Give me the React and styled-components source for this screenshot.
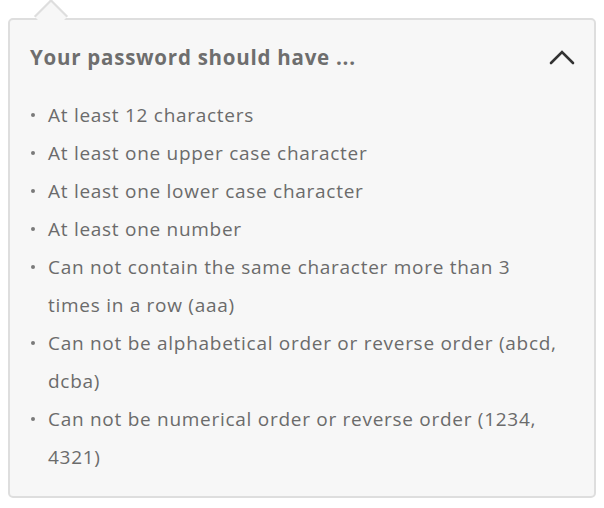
import React from "react";
import styled, { createGlobalStyle } from "styled-components";

const Global = createGlobalStyle`
  html, body { margin: 0; padding: 0; background: #ffffff; }
  body { font-family: "Open Sans", "Noto Sans", sans-serif; }
`;

const Page = styled.div`
  padding: 18px 8px 0 8px;
  width: 604px;
  box-sizing: border-box;
`;

const Popover = styled.section`
  position: relative;
  width: 588px;
  height: 480px;
  box-sizing: border-box;
  background: #f7f7f7;
  border: 2px solid #dedede;
  border-radius: 5px;
  padding: 23px 18px 0 20px;
`;

const Arrow = styled.span`
  position: absolute;
  top: -16px;
  left: 29px;
  width: 22px;
  height: 22px;
  background: #f7f7f7;
  border-top: 2px solid #dedede;
  border-left: 2px solid #dedede;
  transform: rotate(45deg);
  transform-origin: center;
`;

const Header = styled.header`
  display: flex;
  align-items: center;
  justify-content: space-between;
  height: 28px;
`;

const Title = styled.h2`
  margin: 0;
  font-size: 20.5px;
  letter-spacing: 0.75px;
  line-height: 28px;
  font-weight: 700;
  color: #6e6e6e;
`;

const Toggle = styled.button`
  border: 0;
  background: none;
  padding: 0;
  width: 28px;
  height: 28px;
  display: flex;
  align-items: center;
  justify-content: center;
  cursor: pointer;
`;

const List = styled.ul`
  list-style: none;
  margin: 25px 0 0 0;
  padding: 0;
`;

const Item = styled.li`
  display: flex;
  align-items: flex-start;
  font-size: 19px;
  letter-spacing: 0.72px;
  line-height: 38px;
  color: #6b6b6b;
`;

const Bullet = styled.span`
  flex: none;
  width: 4px;
  height: 4px;
  border-radius: 50%;
  background: #7a7a7a;
  margin: 17px 13px 0 1px;
`;

const Text = styled.span`
  flex: 1;
  max-width: 515px;
`;

const rules = [
  "At least 12 characters",
  "At least one upper case character",
  "At least one lower case character",
  "At least one number",
  "Can not contain the same character more than 3 times in a row (aaa)",
  "Can not be alphabetical order or reverse order (abcd, dcba)",
  "Can not be numerical order or reverse order (1234, 4321)",
];

export default function App() {
  return (
    <>
      <Global />
      <Page>
        <Popover>
          <Arrow />
          <Header>
            <Title>Your password should have ...</Title>
            <Toggle aria-label="Collapse">
              <svg width="26" height="16" viewBox="0 0 26 16">
                <polyline
                  points="2,14 13,3 24,14"
                  fill="none"
                  stroke="#333"
                  strokeWidth="2.6"
                  strokeLinecap="round"
                  strokeLinejoin="miter"
                />
              </svg>
            </Toggle>
          </Header>
          <List>
            {rules.map((r) => (
              <Item key={r}>
                <Bullet />
                <Text>{r}</Text>
              </Item>
            ))}
          </List>
        </Popover>
      </Page>
    </>
  );
}
